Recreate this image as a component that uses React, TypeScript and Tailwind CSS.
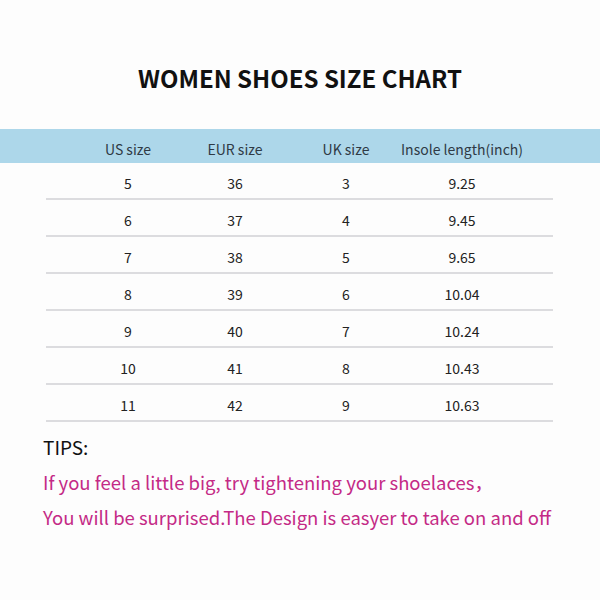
const rows = [
  ["5", "36", "3", "9.25"],
  ["6", "37", "4", "9.45"],
  ["7", "38", "5", "9.65"],
  ["8", "39", "6", "10.04"],
  ["9", "40", "7", "10.24"],
  ["10", "41", "8", "10.43"],
  ["11", "42", "9", "10.63"],
];

const cols = "grid grid-cols-[164px_50px_172px_60px] justify-items-center";

export default function App() {
  return (
    <div
      className="w-[600px] h-[600px] bg-[#fdfdfd] flex flex-col"
      style={{ fontFamily: '"Noto Sans CJK SC", "Noto Sans", sans-serif' }}
    >
      <h1 className="mt-[60px] h-[36px] text-center text-[24px] leading-[36px] font-bold text-[#111]">
        WOMEN SHOES SIZE CHART
      </h1>

      <div className="mt-[33px] h-[34px] bg-[#add7ea] flex items-center pt-[6px]">
        <div className={`${cols} ml-[46px] text-[14px] text-[#2f3a45] whitespace-nowrap`}>
          <span>US size</span>
          <span>EUR size</span>
          <span>UK size</span>
          <span>Insole length(inch)</span>
        </div>
      </div>

      <div className="ml-[46px] w-[507px]">
        {rows.map((r) => (
          <div
            key={r[0]}
            className={`${cols} h-[37px] items-center pt-[6px] border-b-2 border-[#dcdcdf] text-[14px] text-[#222]`}
          >
            {r.map((v, i) => (
              <span key={i} className="whitespace-nowrap">{v}</span>
            ))}
          </div>
        ))}
      </div>

      <div className="ml-[43px] mt-[10px] text-[19px] leading-[30px] text-[#111]">TIPS:</div>
      <div className="ml-[43px] mt-[3px] text-[18.5px] leading-[35px] text-[#c42a86] whitespace-nowrap">
        <p>If you feel a little big, try tightening your shoelaces，</p>
        <p>You will be surprised.The Design is easyer to take on and off</p>
      </div>
    </div>
  );
}
